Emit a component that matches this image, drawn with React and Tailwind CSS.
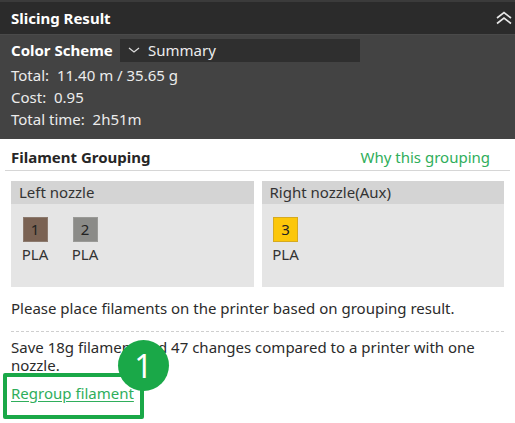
function DoubleUp() {
  return (
    <svg width="18" height="14" viewBox="0 0 18 14" fill="none" stroke="#e8e8e8" strokeWidth="1.6">
      <path d="M2 7 L9 1.5 L16 7" />
      <path d="M2 12.5 L9 7 L16 12.5" />
    </svg>
  );
}

function Swatch({ n, color, border }) {
  return (
    <div className="flex flex-col items-center w-[26px]">
      <div
        className={`w-[25px] h-[25px] flex items-center justify-center text-[15px] text-[#222] border ${border} ${color}`}
      >
        {n}
      </div>
      <div className="mt-[2px] text-[15px] text-[#333] leading-[20px]">PLA</div>
    </div>
  );
}

function NozzleBox({ title, children }) {
  return (
    <div className="flex-1 h-[106px] bg-[#e5e5e5]">
      <div className="h-[23px] bg-[#d4d4d4] px-[8px] flex items-center text-[15px] text-[#333]">{title}</div>
      <div className="flex gap-[24px] pl-[11px] pt-[13px]">{children}</div>
    </div>
  );
}

export default function App() {
  return (
    <div className="w-[515px] h-[423px] bg-white relative overflow-hidden font-['Noto_Sans',sans-serif]">
      {/* Slicing result header */}
      <div className="h-[2px] bg-[#3b3b3b]" />
      <div className="h-[32px] bg-[#2b2b2b] flex items-center justify-between pl-[11px] pr-[2px]">
        <span className="text-white font-bold text-[15px]">Slicing Result</span>
        <DoubleUp />
      </div>

      <div className="h-[105px] bg-[#434343] border-t border-[#4a4a4a] px-[11px] pt-[3px] text-[#ececec] text-[15px]">
        <div className="flex items-center h-[24px]">
          <span className="font-bold text-white w-[109px]">Color Scheme</span>
          <div className="w-[240px] h-[23px] bg-[#2f2f2f] flex items-center pl-[8px] gap-[8px]">
            <svg width="12" height="8" viewBox="0 0 12 8" fill="none" stroke="#ddd" strokeWidth="1.3">
              <path d="M1 2 L6 6 L11 2" />
            </svg>
            <span>Summary</span>
          </div>
        </div>
        <div className="leading-[22px] mt-[2px]">
          <div>Total:&nbsp; 11.40 m / 35.65 g</div>
          <div>Cost:&nbsp; 0.95</div>
          <div>Total time:&nbsp; 2h51m</div>
        </div>
      </div>

      {/* Filament grouping */}
      <div className="px-[5px] pt-[7px]">
        <div className="flex items-center justify-between pl-[6px] pr-[20px] h-[22px]">
          <span className="font-bold text-[15px] text-[#262626]">Filament Grouping</span>
          <span className="text-[15px] text-[#2fae5b]">Why this grouping</span>
        </div>
        <div className="h-px bg-[#d6d6d6] mt-[2px]" />
        <div className="flex gap-[8px] px-[6px] mt-[10px]">
          <NozzleBox title="Left nozzle">
            <Swatch n="1" color="bg-[#7a6253]" border="border-[#8c7a6e]" />
            <Swatch n="2" color="bg-[#8b8b88]" border="border-[#9a9a97]" />
          </NozzleBox>
          <NozzleBox title="Right nozzle(Aux)">
            <Swatch n="3" color="bg-[#fcc70a]" border="border-[#d6aa20]" />
          </NozzleBox>
        </div>

        <div className="px-[6px] text-[15px] text-[#2b2b2b]">
          <div className="mt-[10px] leading-[22px]">Please place filaments on the printer based on grouping result.</div>
          <div className="border-t border-dashed border-[#cfcfcf] mt-[12px]" />
          <div className="mt-[6px] leading-[18px]">
            Save 18g filament and 47 changes compared to a printer with one nozzle.
          </div>
          <div className="mt-[9px] leading-[20px]">
            <span className="text-[#2fae5b] underline underline-offset-2">Regroup filament</span>
          </div>
        </div>
      </div>

      {/* annotation */}
      <div className="absolute left-[3px] top-[373px] w-[141px] h-[46px] border-[4px] border-[#1aa848] rounded-[2px]" />
      <div className="absolute left-[118px] top-[340px] w-[51px] h-[51px] rounded-full bg-[#1aa848] flex items-center justify-center text-white text-[32px] leading-none">
        1
      </div>
    </div>
  );
}
